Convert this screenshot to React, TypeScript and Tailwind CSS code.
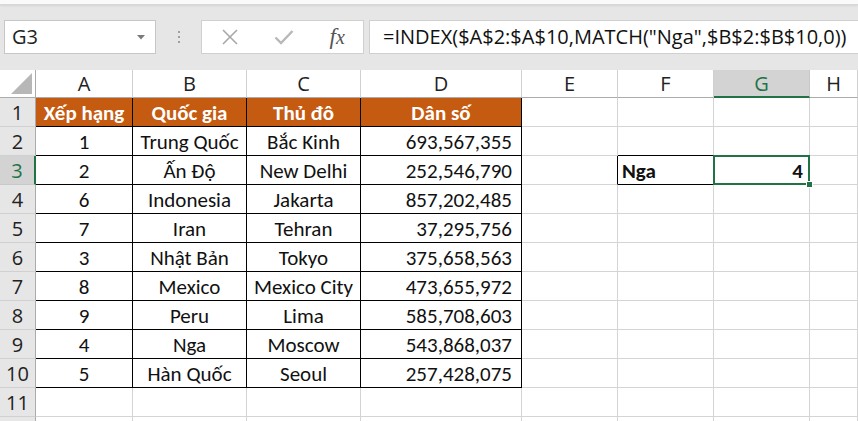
import React from "react";

const cols = ["A", "B", "C", "D", "E", "F", "G", "H"];

const rows: [string, string, string, string][] = [
  ["1", "Trung Quốc", "Bắc Kinh", "693,567,355"],
  ["2", "Ấn Độ", "New Delhi", "252,546,790"],
  ["6", "Indonesia", "Jakarta", "857,202,485"],
  ["7", "Iran", "Tehran", "37,295,756"],
  ["3", "Nhật Bản", "Tokyo", "375,658,563"],
  ["8", "Mexico", "Mexico City", "473,655,972"],
  ["9", "Peru", "Lima", "585,708,603"],
  ["4", "Nga", "Moscow", "543,868,037"],
  ["5", "Hàn Quốc", "Seoul", "257,428,075"],
];

// every sheet row is a 29px grid; leading is pinned so text never grows a row
const gridCols =
  "grid grid-cols-[36px_97px_114px_114px_161px_96px_96px_96px_1fr] grid-rows-[29px] h-[29px] leading-[26px]";
const ui = "font-['Open_Sans',sans-serif]";

const FormulaBar = () => (
  <div className={`flex h-[34px] items-stretch pl-[4px] ${ui}`}>
    <div className="flex w-[152px] items-center justify-between border border-[#c6c6c6] bg-white pl-[7px] pr-[10px] text-[20px] text-[#222]">
      <span>G3</span>
      <svg width="8" height="5" viewBox="0 0 8 5">
        <polygon points="0,0 8,0 4,4.5" fill="#7a7a7a" />
      </svg>
    </div>
    <div className="flex w-[45px] flex-col items-center justify-center gap-[3px]">
      <div className="h-[2px] w-[2px] bg-[#a0a0a0]" />
      <div className="h-[2px] w-[2px] bg-[#a0a0a0]" />
      <div className="h-[2px] w-[2px] bg-[#a0a0a0]" />
    </div>
    <div className="flex w-[163px] items-center border border-[#d0d0d0] bg-white">
      <div className="flex w-[56px] justify-center pl-[1px]">
        <svg width="18" height="18" viewBox="0 0 18 18">
          <path d="M2 2 L16 16 M16 2 L2 16" stroke="#a8a8a8" strokeWidth="1.6" fill="none" />
        </svg>
      </div>
      <div className="flex w-[54px] justify-center">
        <svg width="20" height="16" viewBox="0 0 20 16">
          <path d="M1.5 8.5 L7 14 L18.5 2" stroke="#b8b8b8" strokeWidth="2.4" fill="none" />
        </svg>
      </div>
      <div className="flex w-[52px] justify-center">
        <span className="font-['Liberation_Serif',serif] text-[23px] italic text-[#555]">
          f<span className="text-[20px]">x</span>
        </span>
      </div>
    </div>
    <div className="ml-[5px] flex flex-1 items-center border border-r-0 border-[#d0d0d0] bg-white pl-[13px] text-[20px] text-[#111]">
      =INDEX($A$2:$A$10,MATCH("Nga",$B$2:$B$10,0))
    </div>
  </div>
);

const HeaderRow = () => (
  <div className={`grid h-[28px] grid-cols-[36px_97px_114px_114px_161px_96px_96px_96px_1fr] grid-rows-[28px] leading-[24px] ${ui}`}>
    <div className="flex items-end justify-end border-b border-r border-[#ababab] pb-[3px] pr-[3px]">
      <svg width="21" height="21" viewBox="0 0 21 21">
        <polygon points="21,0 21,21 0,21" fill="#b7b7b7" />
      </svg>
    </div>
    {cols.map((c) =>
      c === "G" ? (
        <div
          key={c}
          className="flex items-center justify-center border-b-2 border-r border-b-[#217346] border-r-[#c8c8c8] bg-[#d3d3d3] pt-[2px] text-[20px] text-[#217346]"
        >
          {c}
        </div>
      ) : (
        <div
          key={c}
          className="flex items-center justify-center border-b border-r border-b-[#ababab] border-r-[#d0d0d0] pt-[1px] text-[20px] text-[#222]"
        >
          {c}
        </div>
      )
    )}
  </div>
);

const RowHead = ({ n, active }: { n?: number; active?: boolean }) =>
  active ? (
    <div className={`flex items-center justify-center border-b border-r-2 border-b-[#c8c8c8] border-r-[#217346] bg-[#d3d3d3] pt-[1px] text-[20px] text-[#217346] ${ui}`}>
      {n}
    </div>
  ) : (
    <div className={`flex items-center justify-center border-b border-r border-b-[#d0d0d0] border-r-[#ababab] bg-[#e6e6e6] pt-[1px] text-[20px] text-[#222] ${ui}`}>
      {n}
    </div>
  );

const Blank = ({ r = "border-r-[#d4d4d4]", b = "border-b-[#d4d4d4]" }: { r?: string; b?: string }) => (
  <div className={`border-b border-r bg-white ${r} ${b}`} />
);

const cell = "flex items-center border-b border-r border-black pt-[2px] text-[21px] text-[#111]";

const Sheet = () => (
  <div className="bg-white">
    <HeaderRow />
    <div className={gridCols}>
      <RowHead n={1} />
      {["Xếp hạng", "Quốc gia", "Thủ đô", "Dân số"].map((t) => (
        <div
          key={t}
          className="flex items-center justify-center border-b border-r border-black bg-[#c55a11] pt-[2px] text-[21px] font-bold text-white"
        >
          {t}
        </div>
      ))}
      <Blank />
      <Blank />
      <Blank />
      <Blank />
    </div>
    {rows.map((r, i) => {
      const n = i + 2;
      return (
        <div key={n} className={gridCols}>
          <RowHead n={n} active={n === 3} />
          <div className={`${cell} justify-center`}>{r[0]}</div>
          <div className={`${cell} justify-center`}>{r[1]}</div>
          <div className={`${cell} justify-center`}>{r[2]}</div>
          <div className={`${cell} justify-end pr-[9px]`}>{r[3]}</div>
          {n === 3 ? (
            <>
              <Blank r="border-r-black" />
              <div className={`${cell} pl-[4px] font-bold`}>Nga</div>
              <div className="relative flex items-center justify-end border-b border-r border-[#d4d4d4] pr-[6px] pt-[2px] text-[21px] font-bold text-[#111]">
                4
                <div className="absolute -left-[1px] -top-[1px] bottom-[-1px] right-[-1px] border-2 border-[#217346]" />
                <div className="absolute bottom-[-4px] right-[-4px] z-10 h-[7px] w-[7px] border border-white bg-[#217346]" />
              </div>
              <Blank />
            </>
          ) : (
            <>
              <Blank />
              <Blank b={n === 2 ? "border-b-black" : "border-b-[#d4d4d4]"} />
              <Blank />
              <Blank />
            </>
          )}
        </div>
      );
    })}
    <div className={gridCols}>
      <RowHead n={11} />
      {cols.map((c) => (
        <Blank key={c} />
      ))}
    </div>
    <div className={gridCols}>
      <RowHead />
      {cols.map((c) => (
        <Blank key={c} />
      ))}
    </div>
  </div>
);

export default function App() {
  return (
    <div className="h-[421px] w-[858px] overflow-hidden bg-[#e6e6e6] font-['Carlito','Calibri','Lato',sans-serif]">
      <div className="h-[5px] border-b border-[#d8d8d8] bg-[#fafafa] shadow-[0_1px_2px_rgba(0,0,0,0.08)]" />
      <div className="pt-[15px]">
        <FormulaBar />
      </div>
      <div className="h-[16px]" />
      <Sheet />
    </div>
  );
}
